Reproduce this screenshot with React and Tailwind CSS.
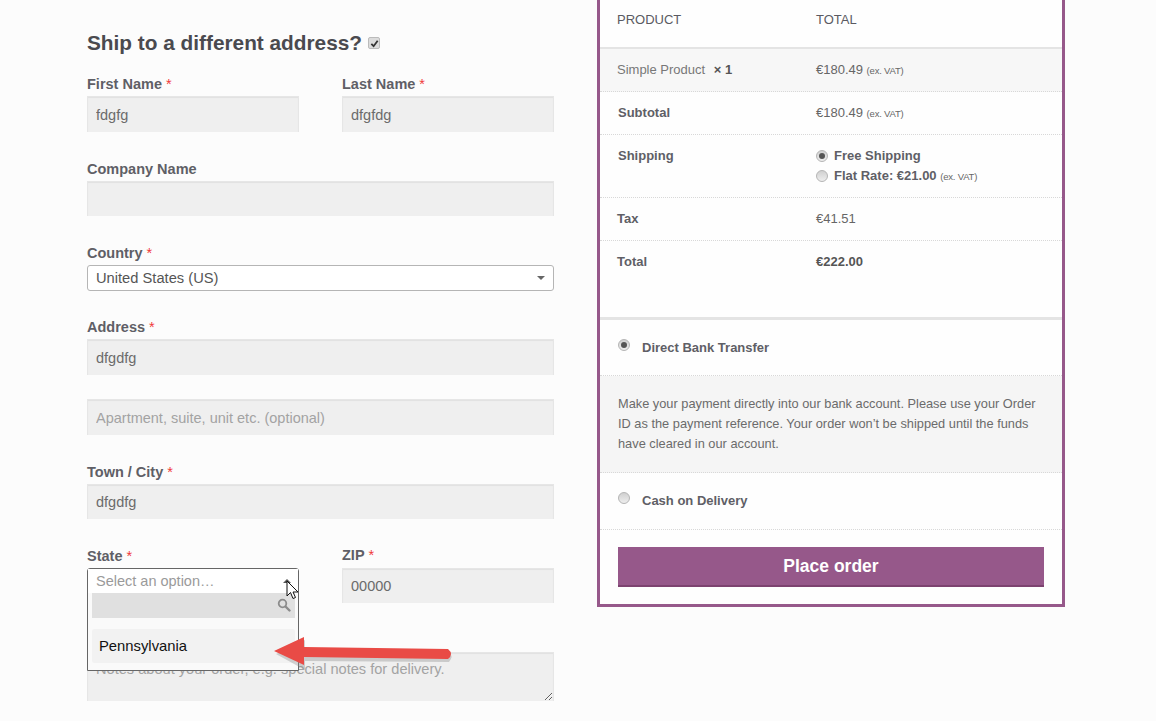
import React from "react";

const inputCls = "block w-full border-t border-l border-r border-[#e6e6e6] bg-[#efefef] px-2 text-[14.5px] text-[#6b6b6b] placeholder:text-[#a3a3a3] shadow-[inset_0_1px_1px_rgba(0,0,0,0.06)] outline-none";

function Label({ children, req, cls = "" }) {
  return (
    <div className={"text-[14.5px] leading-[20px] font-bold text-[#5f5f66] " + cls}>
      {children}
      {req && <span className="font-normal text-[#f03a3a]"> *</span>}
    </div>
  );
}

function Radio({ on }) {
  return (
    <span className={"flex h-[12px] w-[12px] shrink-0 items-center justify-center rounded-full border border-[#b5b5b5] bg-[linear-gradient(#d0d0d0,#eeeeee)]"}>
      {on && <span className="h-[6px] w-[6px] rounded-full bg-[#555]" />}
    </span>
  );
}

function Vat() {
  return <span className="text-[9.5px] font-normal tracking-[-0.2px] text-[#666]">(ex. VAT)</span>;
}

function Row({ cls = "", left, right, h, bg = "" }) {
  return (
    <div className={"flex border-b border-dotted border-[#d8d8d8] " + h + " " + bg + " " + cls}>
      <div className="w-[216px] shrink-0 pl-[17px] pt-[11px]">{left}</div>
      <div className="pt-[11px]">{right}</div>
    </div>
  );
}

export default function App() {
  return (
    <div className="relative flex h-[721px] w-[1156px] gap-[43px] overflow-hidden bg-[#fcfcfc] pl-[87px] font-['Liberation_Sans',Arial,sans-serif] text-[14px] text-[#666]">
      {/* Left form */}
      <div className="w-[467px] shrink-0 pt-[30px]">
        <div className="flex h-[26px] items-center text-[20.8px] font-bold text-[#4a4a4f]">
          Ship to a different address?
          <span className="ml-[6px] flex h-[12px] w-[12px] items-center justify-center rounded-[2px] border border-[#bbb] bg-[#dcdcdc]">
            <svg width="9" height="9" viewBox="0 0 10 10"><path d="M1.5 5.5 L4 8 L8.5 2" fill="none" stroke="#333" strokeWidth="2" /></svg>
          </span>
        </div>

        <div className="mt-[18px] flex gap-[43px]">
          <div className="w-[212px]">
            <Label req>First Name</Label>
            <input defaultValue="fdgfg" className={inputCls + " mt-[2px] h-[36px]"} />
          </div>
          <div className="w-[212px]">
            <Label req>Last Name</Label>
            <input defaultValue="dfgfdg" className={inputCls + " mt-[2px] h-[36px]"} />
          </div>
        </div>

        <Label cls="mt-[27px]">Company Name</Label>
        <input className={inputCls + " mt-[2px] h-[35px]"} />

        <Label req cls="mt-[27px]">Country</Label>
        <div className="relative mt-[2px] flex h-[26px] items-center rounded-[3px] border border-[#b5b5b5] bg-white pl-[8px] pt-[1px] text-[14.7px] text-[#555]">
          United States (US)
          <span className="absolute right-[8px] top-[10px] h-0 w-0 border-x-[4px] border-t-[4px] border-x-transparent border-t-[#666]" />
        </div>

        <Label req cls="mt-[26px]">Address</Label>
        <input defaultValue="dfgdfg" className={inputCls + " mt-[2px] h-[36px]"} />
        <input placeholder="Apartment, suite, unit etc. (optional)" className={inputCls + " mt-[24px] h-[36px]"} />

        <Label req cls="mt-[27px]">Town / City</Label>
        <input defaultValue="dfgdfg" className={inputCls + " mt-[2px] h-[35px]"} />

        <div className="mt-[27px] flex gap-[43px]">
          <div className="relative w-[212px]">
            <Label req>State</Label>
            <div className="h-[35px]" />
            <div className="absolute left-0 top-[22px] z-10 h-[103px] w-[212px] rounded-t-[3px] border border-[#666] bg-[#fafafa]">
              <div className="flex h-[24px] items-center bg-white pl-[8px] pt-[1px] text-[14.5px] text-[#9a9a9a]">
                Select an option…
                <span className="absolute right-[7px] top-[10px] h-0 w-0 border-x-[4px] border-b-[4px] border-x-transparent border-b-[#555]" />
              </div>
              <div className="relative ml-[4px] mr-[3px] h-[25px] bg-[#e0e0e0]">
                <svg className="absolute right-[4px] top-[5px]" width="14" height="14" viewBox="0 0 14 14">
                  <circle cx="5.5" cy="5.5" r="3.8" fill="none" stroke="#8c8c8c" strokeWidth="1.8" />
                  <path d="M8.5 8.5 L12.5 12.5" stroke="#8c8c8c" strokeWidth="2.4" strokeLinecap="round" />
                </svg>
              </div>
              <div className="ml-[4px] mr-[3px] mt-[11px] flex h-[34px] items-center rounded-[2px] bg-[#f2f2f2] pl-[7px] text-[14.8px] text-[#111]">
                Pennsylvania
              </div>
            </div>
          </div>
          <div className="w-[212px]">
            <Label req cls="-mt-[1px]">ZIP</Label>
            <input defaultValue="00000" className={inputCls + " mt-[3px] h-[35px]"} />
          </div>
        </div>

        <textarea
          placeholder="Notes about your order, e.g. special notes for delivery."
          className={inputCls + " mt-[49px] h-[49px] pt-[7px] text-[14.6px] leading-[18px]"}
        />
      </div>

      {/* Right order box */}
      <div className="-mt-[10px] h-[617px] w-[468px] shrink-0 border-[3px] border-[#96588a] bg-[#fefefe] text-[13px] text-[#666]">
        <div className="flex h-[56px] border-b-[2px] border-[#e4e4e4] font-normal text-[13px]">
          <div className="w-[216px] pl-[17px] pt-[17px] text-[#5a5a62]">PRODUCT</div>
          <div className="pt-[17px] text-[#5a5a62]">TOTAL</div>
        </div>
        <Row h="h-[43px]" bg="bg-[#f7f7f7]"
          left={<span className="text-[#777]">Simple Product <span className="ml-[5px] font-bold text-[#555]">× 1</span></span>}
          right={<span>€180.49 <Vat /></span>} />
        <Row h="h-[43px]"
          left={<b className="ml-[1px] text-[#5f5f66]">Subtotal</b>}
          right={<span>€180.49 <Vat /></span>} />
        <Row h="h-[63px]"
          left={<b className="ml-[1px] text-[#5f5f66]">Shipping</b>}
          right={
            <div className="font-bold text-[#5f5f66]">
              <div className="flex h-[20px] items-center gap-[6px]"><Radio on />Free Shipping</div>
              <div className="flex h-[20px] items-center gap-[6px]"><Radio /><span>Flat Rate: €21.00 <Vat /></span></div>
            </div>
          } />
        <Row h="h-[43px]" left={<b className="text-[#5f5f66]">Tax</b>} right={<span>€41.51</span>} />
        <div className="flex h-[79px] border-b-[3px] border-[#e4e4e4]">
          <div className="w-[216px] pl-[17px] pt-[11px]"><b className="text-[#5f5f66]">Total</b></div>
          <div className="pt-[11px]"><b className="text-[#555]">€222.00</b></div>
        </div>

        <div className="flex h-[56px] items-start gap-[12px] border-b border-dotted border-[#d8d8d8] pl-[18px] pt-[19px] font-bold text-[#5f5f66]">
          <Radio on /><span className="-mt-[1px]">Direct Bank Transfer</span>
        </div>
        <div className="h-[97px] border-b border-dotted border-[#d8d8d8] bg-[#f5f5f5] pl-[18px] pr-[20px] pt-[18px] text-[12.8px] leading-[20px] text-[#6b6b6b]">
          Make your payment directly into our bank account. Please use your Order ID as the payment reference. Your order won’t be shipped until the funds have cleared in our account.
        </div>
        <div className="flex h-[57px] items-start gap-[12px] border-b border-dotted border-[#d8d8d8] pl-[18px] pt-[19px] font-bold text-[#5f5f66]">
          <Radio /><span className="-mt-[1px]">Cash on Delivery</span>
        </div>
        <div className="mx-[18px] mt-[17px] flex h-[40px] w-[426px] items-center justify-center border-b-[2px] border-[#7d4370] bg-[#96588a] text-[17.5px] font-bold text-white">
          Place order
        </div>
      </div>

      {/* Red arrow annotation */}
      <svg className="absolute left-[270px] top-[632px] z-20" width="190" height="42" viewBox="0 0 190 42">
        <path d="M5 20 L34 6 L34 15 L178 18 Q183 22 178 28 L34 27 L34 36 Z" fill="#888" opacity="0.35" transform="translate(1 2)" />
        <path d="M4 19 L34 5 L34 15 L178 17 Q184 22 178 27 L34 25 L34 33 Z" fill="#e94b46" />
      </svg>

      {/* Mouse cursor */}
      <svg className="absolute left-[286px] top-[580px] z-20" width="16" height="21" viewBox="0 0 16 21">
        <path d="M1 1 L1 16 L4.5 12.5 L7 18.5 L9.5 17.5 L7 12 L12 12 Z" fill="#fff" stroke="#111" strokeWidth="1" />
      </svg>
    </div>
  );
}
